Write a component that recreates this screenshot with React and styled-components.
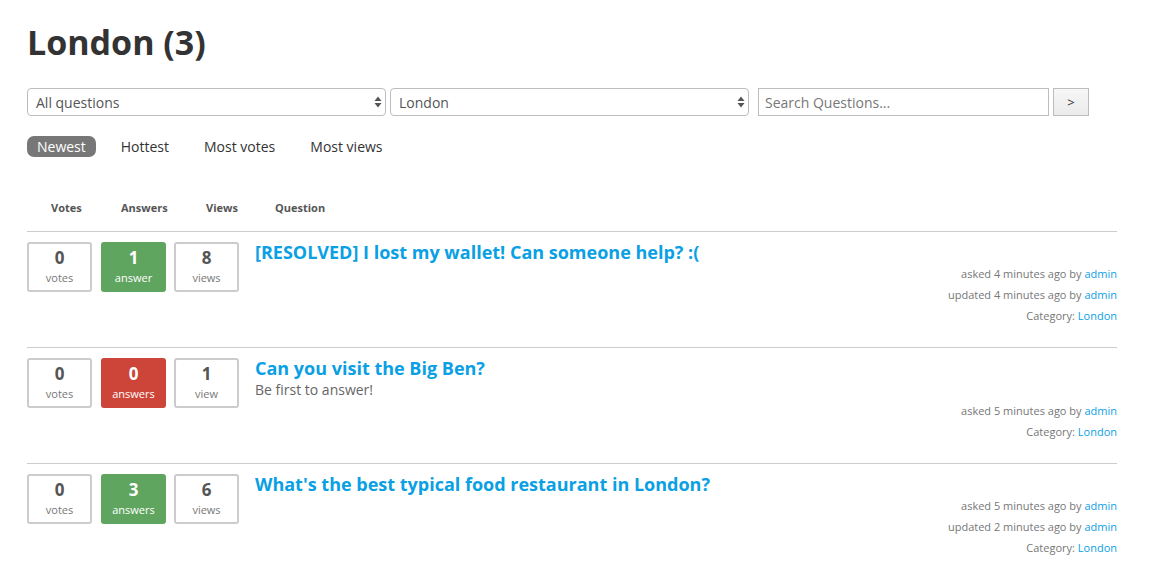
import React from 'react';
import styled, { createGlobalStyle } from 'styled-components';

const GlobalStyle = createGlobalStyle`
  body {
    margin: 0;
    background: #fff;
    font-family: "Open Sans", "Liberation Sans", sans-serif;
    color: #555;
  }
`;

const Page = styled.div`
  padding: 22px 32px 0 27px;
`;

const Title = styled.h1`
  margin: 0 0 26px;
  font-size: 34px;
  line-height: 40px;
  font-weight: 700;
  color: #333;
`;

const FilterBar = styled.form`
  display: flex;
  align-items: center;
  width: 1062px;
`;

const SelectWrap = styled.div`
  position: relative;
  width: 359px;
  height: 28px;
  margin-right: ${p => p.$gap || 0}px;
`;

const Select = styled.div`
  box-sizing: border-box;
  height: 100%;
  border: 1px solid #bdbdbd;
  border-radius: 4px;
  background: #fff;
  padding: 0 8px;
  display: flex;
  align-items: center;
  font-size: 14px;
  color: #555;
`;

const Arrows = styled.svg`
  position: absolute;
  right: 4px;
  top: 8px;
`;

const SearchInput = styled.input`
  box-sizing: border-box;
  width: 291px;
  height: 28px;
  border: 1px solid #bdbdbd;
  padding: 0 6px;
  font-family: inherit;
  font-size: 14px;
  color: #555;
  margin-right: 4px;
  outline: none;
  &::placeholder {
    color: #777;
  }
`;

const GoButton = styled.button`
  box-sizing: border-box;
  width: 36px;
  height: 28px;
  border: 1px solid #bdbdbd;
  background: linear-gradient(#f7f7f7, #ebebeb);
  font-family: inherit;
  font-size: 13px;
  color: #333;
  padding: 0;
`;

const Tabs = styled.div`
  display: flex;
  gap: 15px;
  margin-top: 20px;
`;

const Tab = styled.span`
  padding: 0 10px;
  height: 21px;
  line-height: 21px;
  font-size: 14px;
  border-radius: 7px;
  color: ${p => (p.$active ? '#fff' : '#333')};
  background: ${p => (p.$active ? '#777' : 'transparent')};
`;

const List = styled.div`
  margin-top: 43px;
  width: 1090px;
`;

const HeaderRow = styled.div`
  display: flex;
  padding: 0 0 16px 24px;
  border-bottom: 1px solid #ccc;
`;

const HeaderCell = styled.span`
  width: ${p => p.$w}px;
  font-size: 11px;
  font-weight: 700;
  color: #555;
  line-height: 15px;
`;

const Row = styled.div`
  display: flex;
  padding: 10px 0 21px;
  border-bottom: 1px solid #ccc;
  &:last-child {
    border-bottom: none;
  }
`;

const Counts = styled.div`
  display: flex;
  gap: 8px;
  margin-right: 16px;
  align-self: flex-start;
`;

const Count = styled.div`
  box-sizing: border-box;
  width: 65px;
  height: 50px;
  border-radius: 3px;
  border: 2px solid ${p => (p.$tone === 'good' ? '#5fa55f' : p.$tone === 'bad' ? '#cc4538' : '#ccc')};
  background: ${p => (p.$tone === 'good' ? '#5fa55f' : p.$tone === 'bad' ? '#cc4538' : '#fff')};
  color: ${p => (p.$tone ? '#fff' : '#555')};
  display: flex;
  flex-direction: column;
  align-items: center;
  padding-top: 3px;
  &:nth-child(2) {
    margin-left: 1px;
  }
`;

const Num = styled.span`
  font-size: 17px;
  font-weight: 700;
  line-height: 22px;
`;

const Label = styled.span`
  font-size: 11px;
  line-height: 18px;
  color: ${p => (p.$light ? '#fff' : '#777')};
`;

const Body = styled.div`
  flex: 1;
  display: flex;
  flex-direction: column;
`;

const QTitle = styled.a`
  font-size: 18px;
  font-weight: 700;
  line-height: 21px;
  color: #0aa0e4;
  text-decoration: none;
`;

const Sub = styled.div`
  font-size: 14px;
  line-height: 21px;
  color: #666;
`;

const Meta = styled.div`
  text-align: right;
  font-size: 11px;
  line-height: 21px;
  color: #777;
  a {
    color: #0aa0e4;
    text-decoration: none;
  }
`;

const questions = [
  {
    title: "[RESOLVED] I lost my wallet! Can someone help? :(",
    votes: 0, answers: 1, views: 8,
    asked: '4 minutes', updated: '4 minutes',
  },
  {
    title: 'Can you visit the Big Ben?',
    votes: 0, answers: 0, views: 1,
    asked: '5 minutes', sub: 'Be first to answer!',
  },
  {
    title: "What's the best typical food restaurant in London?",
    votes: 0, answers: 3, views: 6,
    asked: '5 minutes', updated: '2 minutes',
  },
];

const plural = (n, word) => (n === 1 ? word : word + 's');

const Updown = () => (
  <Arrows width="8" height="12" viewBox="0 0 8 12">
    <path d="M4 0.5 L7.5 5 H0.5 Z" fill="#555" />
    <path d="M4 11.5 L7.5 7 H0.5 Z" fill="#555" />
  </Arrows>
);

export default function App() {
  return (
    <Page>
      <GlobalStyle />
      <Title>London (3)</Title>

      <FilterBar onSubmit={e => e.preventDefault()}>
        <SelectWrap $gap={4}>
          <Select>All questions</Select>
          <Updown />
        </SelectWrap>
        <SelectWrap $gap={9}>
          <Select>London</Select>
          <Updown />
        </SelectWrap>
        <SearchInput placeholder="Search Questions..." />
        <GoButton type="submit">&gt;</GoButton>
      </FilterBar>

      <Tabs>
        <Tab $active>Newest</Tab>
        <Tab>Hottest</Tab>
        <Tab>Most votes</Tab>
        <Tab>Most views</Tab>
      </Tabs>

      <List>
        <HeaderRow>
          <HeaderCell $w={70}>Votes</HeaderCell>
          <HeaderCell $w={85}>Answers</HeaderCell>
          <HeaderCell $w={69}>Views</HeaderCell>
          <HeaderCell $w={100}>Question</HeaderCell>
        </HeaderRow>

        {questions.map((q, i) => (
          <Row key={i}>
            <Counts>
              <Count>
                <Num>{q.votes}</Num>
                <Label>{plural(q.votes, 'vote')}</Label>
              </Count>
              <Count $tone={q.answers > 0 ? 'good' : 'bad'}>
                <Num>{q.answers}</Num>
                <Label $light>{plural(q.answers, 'answer')}</Label>
              </Count>
              <Count>
                <Num>{q.views}</Num>
                <Label>{plural(q.views, 'view')}</Label>
              </Count>
            </Counts>
            <Body>
              <QTitle href="#">{q.title}</QTitle>
              {q.sub && <Sub>{q.sub}</Sub>}
              <Meta>asked {q.asked} ago by <a href="#">admin</a></Meta>
              {q.updated && <Meta>updated {q.updated} ago by <a href="#">admin</a></Meta>}
              <Meta>Category: <a href="#">London</a></Meta>
            </Body>
          </Row>
        ))}
      </List>
    </Page>
  );
}
